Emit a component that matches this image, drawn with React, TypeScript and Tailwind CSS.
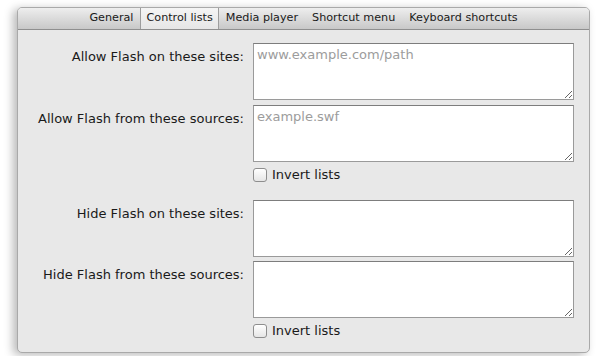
const tabs = ["General", "Control lists", "Media player", "Shortcut menu", "Keyboard shortcuts"];

function ListField({ label, placeholder }: { label: string; placeholder?: string }) {
  return (
    <div className="flex items-start">
      <label className="w-[235px] shrink-0 pr-[9px] pt-[6px] text-right text-[13px] leading-[16px] text-[#1a1a1a]">
        {label}
      </label>
      <textarea
        placeholder={placeholder}
        className="h-[57px] w-[321px] border border-[#9a9a9a] border-t-[#7d7d7d] bg-white px-[3px] py-[3px] text-[13px] leading-[16px] text-[#222] outline-none placeholder:text-[#9c9c9c]"
      />
    </div>
  );
}

function InvertLists() {
  return (
    <div className="flex items-center pl-[235px] pt-[5px]">
      <span className="h-[14px] w-[14px] rounded-[3px] border border-[#8e8e8e] bg-gradient-to-b from-white to-[#e6e6e6] shadow-[inset_0_1px_0_white]" />
      <span className="pl-[5px] text-[13px] leading-[16px] text-[#1a1a1a]">Invert lists</span>
    </div>
  );
}

export default function App() {
  return (
    <div
      className="h-[356px] w-[600px] overflow-hidden bg-white pl-[17px] pt-[7px]"
      style={{ fontFamily: '"DejaVu Sans", "Noto Sans", sans-serif' }}
    >
      <div className="h-[346px] w-[573px] overflow-hidden rounded-[5px] border border-[#a9a9a9] bg-[#e8e8e8] shadow-[-4px_2px_10px_rgba(0,0,0,0.28)]">
        {/* tab strip */}
        <div className="flex h-[22px] justify-center border-b border-[#8f8f8f] bg-gradient-to-b from-[#eeeeee] to-[#c8c8c8]">
          {tabs.map((t) => {
            const active = t === "Control lists";
            return (
              <div
                key={t}
                className={
                  active
                    ? "flex items-center border-x border-[#9d9d9d] bg-gradient-to-b from-[#f5f5f5] to-[#e6e6e6] px-[5px] text-[11.2px] text-[#1a1a1a]"
                    : "flex items-center px-[7px] text-[11.2px] text-[#1a1a1a]"
                }
              >
                {t}
              </div>
            );
          })}
        </div>

        <div className="flex flex-col pt-[13px]">
          <div className="flex flex-col gap-[5px]">
            <ListField label="Allow Flash on these sites:" placeholder="www.example.com/path" />
            <ListField label="Allow Flash from these sources:" placeholder="example.swf" />
          </div>
          <InvertLists />
          <div className="flex flex-col gap-[4px] pt-[17px]">
            <ListField label="Hide Flash on these sites:" />
            <ListField label="Hide Flash from these sources:" />
          </div>
          <InvertLists />
        </div>
      </div>
    </div>
  );
}
